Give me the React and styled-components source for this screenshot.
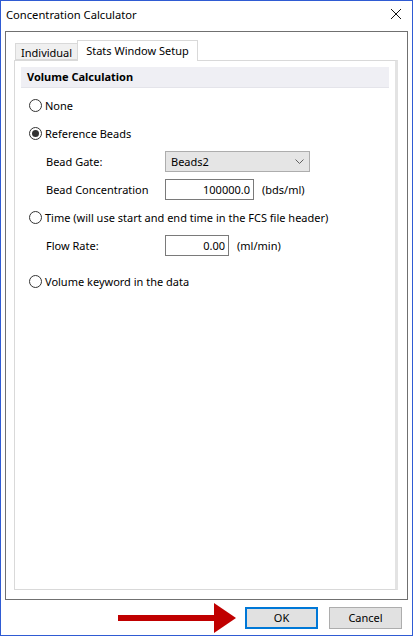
import React from "react";
import styled, { createGlobalStyle } from "styled-components";

const GlobalStyle = createGlobalStyle`
  html, body {
    margin: 0;
    padding: 0;
    background: #ffffff;
  }
  * {
    box-sizing: border-box;
  }
`;

const Window = styled.div`
  position: relative;
  width: 413px;
  height: 636px;
  border: 1px solid #2f5bd3;
  background: #ffffff;
  display: flex;
  flex-direction: column;
  font-family: "Noto Sans", "Open Sans", sans-serif;
  font-size: 11px;
  color: #000000;
`;

const TitleBar = styled.div`
  height: 30px;
  display: flex;
  align-items: center;
  justify-content: space-between;
  padding: 0 10px 0 5px;
  flex-shrink: 0;
`;

const Title = styled.span`
  font-size: 11.2px;
  margin-top: -4px;
`;

const CloseButton = styled.span`
  display: flex;
  width: 12px;
  height: 12px;
  margin-top: -4px;
`;

const OuterPanel = styled.div`
  margin: 0 4px;
  height: 569px;
  border: 1px solid #707070;
  padding: 8px 9px 9px 8px;
  display: flex;
  flex-direction: column;
`;

const TabStrip = styled.div`
  display: flex;
  align-items: flex-end;
  height: 20px;
  padding-left: 1px;
  position: relative;
  z-index: 1;
`;

const Tab = styled.div`
  height: ${(p) => (p.$active ? "21px" : "17px")};
  padding: 0 ${(p) => (p.$active ? "8px" : "5px")};
  display: flex;
  align-items: center;
  background: ${(p) => (p.$active ? "#ffffff" : "#f0f0f0")};
  border: 1px solid #d9d9d9;
  border-bottom: ${(p) => (p.$active ? "none" : "1px solid #d9d9d9")};
  margin-left: ${(p) => (p.$active ? "-1px" : "0")};
  margin-bottom: ${(p) => (p.$active ? "-1px" : "0")};
  padding-bottom: ${(p) => (p.$active ? "2px" : "0")};
  padding-top: ${(p) => (p.$active ? "0" : "1px")};
`;

const TabPage = styled.div`
  flex: 1;
  border: 1px solid #d9d9d9;
  border-right: 3px solid #e3e3e3;
  padding: 6px 6px;
  display: flex;
  flex-direction: column;
`;

const SectionHeader = styled.div`
  height: 21px;
  background: #efeff4;
  border-bottom: 1px solid #e4e4ea;
  display: flex;
  align-items: center;
  padding-left: 6px;
  padding-bottom: 1px;
  font-weight: 700;
`;

const Options = styled.div`
  display: flex;
  flex-direction: column;
  padding-top: 3px;
`;

const Row = styled.div`
  height: 28px;
  display: flex;
  align-items: center;
  padding-left: ${(p) => (p.$indent ? "25px" : "8px")};
  margin-top: ${(p) => p.$gap || 0}px;
`;

const Radio = styled.span`
  width: 13px;
  height: 13px;
  border-radius: 50%;
  border: 1px solid #333333;
  background: #ffffff;
  display: flex;
  align-items: center;
  justify-content: center;
  margin-right: 3px;
  flex-shrink: 0;

  &::after {
    content: "";
    display: ${(p) => (p.$checked ? "block" : "none")};
    width: 7px;
    height: 7px;
    border-radius: 50%;
    background: #333333;
  }
`;

const FieldLabel = styled.span`
  width: 119px;
  flex-shrink: 0;
`;

const Select = styled.div`
  width: 145px;
  height: 21px;
  background: #e5e5e5;
  border: 1px solid #adadad;
  display: flex;
  align-items: center;
  justify-content: space-between;
  padding: 0 5px 0 5px;
`;

const TextInput = styled.div`
  width: ${(p) => p.$width}px;
  height: 21px;
  border: 1px solid #7a7a7a;
  background: #ffffff;
  display: flex;
  align-items: center;
  justify-content: flex-end;
  padding-right: 3px;
`;

const Unit = styled.span`
  margin-left: 8px;
`;

const Footer = styled.div`
  flex: 1;
  display: flex;
  align-items: center;
  justify-content: flex-end;
  gap: 11px;
  padding: 0 10px 0 0;
`;

const Button = styled.div`
  width: 73px;
  height: 22px;
  background: #e1e1e1;
  border: ${(p) => (p.$default ? "2px solid #0078d7" : "1px solid #adadad")};
  display: flex;
  align-items: center;
  justify-content: center;
`;

const Pointer = styled.svg`
  position: absolute;
  left: 116px;
  top: 601px;
`;

const Chevron = () => (
  <svg width="9" height="5" viewBox="0 0 9 5">
    <path d="M0.5 0.5 L4.5 4.5 L8.5 0.5" fill="none" stroke="#606060" strokeWidth="1" />
  </svg>
);

export default function App() {
  return (
    <>
      <GlobalStyle />
      <Window>
        <TitleBar>
          <Title>Concentration Calculator</Title>
          <CloseButton>
            <svg width="12" height="12" viewBox="0 0 12 12">
              <path d="M1 1 L11 11 M11 1 L1 11" stroke="#111" strokeWidth="1" />
            </svg>
          </CloseButton>
        </TitleBar>

        <OuterPanel>
          <TabStrip>
            <Tab>Individual</Tab>
            <Tab $active>Stats Window Setup</Tab>
          </TabStrip>
          <TabPage>
            <SectionHeader>Volume Calculation</SectionHeader>
            <Options>
              <Row>
                <Radio />
                None
              </Row>
              <Row>
                <Radio $checked />
                Reference Beads
              </Row>
              <Row $indent>
                <FieldLabel>Bead Gate:</FieldLabel>
                <Select>
                  Beads2
                  <Chevron />
                </Select>
              </Row>
              <Row $indent>
                <FieldLabel>Bead Concentration</FieldLabel>
                <TextInput $width={89}>100000.0</TextInput>
                <Unit>(bds/ml)</Unit>
              </Row>
              <Row>
                <Radio />
                Time (will use start and end time in the FCS file header)
              </Row>
              <Row $indent>
                <FieldLabel>Flow Rate:</FieldLabel>
                <TextInput $width={64}>0.00</TextInput>
                <Unit>(ml/min)</Unit>
              </Row>
              <Row $gap={8}>
                <Radio />
                Volume keyword in the data
              </Row>
            </Options>
          </TabPage>
        </OuterPanel>

        <Footer>
          <Button $default>OK</Button>
          <Button>Cancel</Button>
        </Footer>

        <Pointer width="122" height="33" viewBox="0 0 122 33">
          <rect x="1" y="13" width="100" height="6" fill="#c00000" />
          <polygon points="97,1 119,16 97,31" fill="#c00000" />
        </Pointer>
      </Window>
    </>
  );
}
